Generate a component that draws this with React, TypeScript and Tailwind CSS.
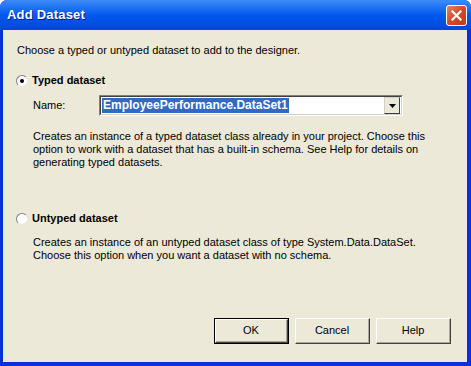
import { FC, ReactNode } from "react";

const font = { fontFamily: '"Liberation Sans", Arial, sans-serif' };

const Radio: FC<{ checked?: boolean }> = ({ checked }) => (
  <span className="relative flex h-[12px] w-[12px] shrink-0 items-center justify-center rounded-full border border-t-[#808080] border-l-[#808080] border-b-[#e8e8e8] border-r-[#e8e8e8] bg-white">
    {checked && <span className="h-[4px] w-[4px] rounded-full bg-black" />}
  </span>
);

const Button: FC<{ children: ReactNode; isDefault?: boolean }> = ({
  children,
  isDefault,
}) => (
  <div
    className={`h-[26px] w-[75px] ${
      isDefault ? "border border-black" : ""
    }`}
  >
    <div className="flex h-full w-full border border-t-white border-l-white border-b-[#404040] border-r-[#404040]">
      <div className="flex h-full w-full items-center justify-center border-b border-r border-[#aca899] bg-[#ece9d8] text-[11px] text-black">
        {children}
      </div>
    </div>
  </div>
);

export default function App() {
  return (
    <div
      className="flex h-[366px] w-[471px] flex-col overflow-hidden rounded-t-[7px] bg-[#0831d9]"
      style={font}
    >
      {/* title bar */}
      <div className="flex h-[30px] shrink-0 items-center justify-between bg-gradient-to-b from-[#3c8cf8] via-[#0058ee] to-[#0148d8] pl-[7px] pr-[4px]">
        <span className="text-[13px] font-bold tracking-[0.2px] text-white [text-shadow:1px_1px_0_#0a1e7a]">
          Add Dataset
        </span>
        <div className="flex h-[21px] w-[21px] items-center justify-center rounded-[3px] border border-white bg-gradient-to-br from-[#e8815e] via-[#d9462a] to-[#c33b1b]">
          <svg width="11" height="11" viewBox="0 0 11 11">
            <path
              d="M1.5 1.5 L9.5 9.5 M9.5 1.5 L1.5 9.5"
              stroke="white"
              strokeWidth="2.2"
              strokeLinecap="square"
            />
          </svg>
        </div>
      </div>

      {/* body */}
      <div className="mb-[4px] ml-[3px] mr-[4px] flex flex-1 flex-col bg-[#ece9d8] pl-[14px] pr-[16px] pt-[14px] text-[11px] leading-[13px] text-black">
        <p>Choose a typed or untyped dataset to add to the designer.</p>

        <label className="mt-[17px] -ml-[1px] flex items-center gap-[4px]">
          <Radio checked />
          <span className="font-bold">Typed dataset</span>
        </label>

        <div className="mt-[8px] ml-[16px] flex items-center">
          <span className="w-[66px]">Name:</span>
          <div className="flex h-[21px] w-[304px] border border-t-[#808080] border-l-[#808080] border-b-white border-r-white">
            <div className="flex flex-1 items-center border border-t-[#404040] border-l-[#404040] border-b-[#d4d0c8] border-r-[#d4d0c8] bg-white pl-[1px] pr-[1px]">
              <span className="bg-[#316ac5] px-[1px] text-[12px] font-bold leading-[15px] text-white">
                EmployeePerformance.DataSet1
              </span>
              <div className="ml-auto flex h-[17px] w-[16px] items-center justify-center border border-t-[#d4d0c8] border-l-[#d4d0c8] border-b-[#404040] border-r-[#404040] bg-[#ece9d8]">
                <svg width="7" height="4" viewBox="0 0 7 4">
                  <path d="M0 0 H7 L3.5 4 Z" fill="black" />
                </svg>
              </div>
            </div>
          </div>
        </div>

        <p className="mt-[14px] ml-[16px]">
          Creates an instance of a typed dataset class already in your project.
          Choose this option to work with a dataset that has a built-in schema.
          See Help for details on generating typed datasets.
        </p>

        <label className="mt-[43px] -ml-[1px] flex items-center gap-[4px]">
          <Radio />
          <span className="font-bold">Untyped dataset</span>
        </label>

        <p className="mt-[11px] ml-[16px]">
          Creates an instance of an untyped dataset class of type
          System.Data.DataSet.
          <br />
          Choose this option when you want a dataset with no schema.
        </p>

        <div className="mt-auto mb-[18px] flex justify-end gap-[6px]">
          <Button isDefault>OK</Button>
          <Button>Cancel</Button>
          <Button>Help</Button>
        </div>
      </div>
    </div>
  );
}
